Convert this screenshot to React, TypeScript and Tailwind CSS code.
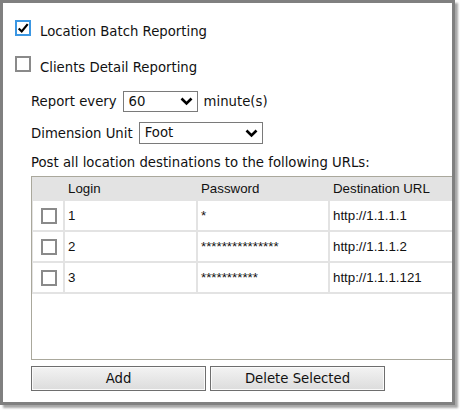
import React from "react";

const rows = [
  { login: "1", password: "*", url: "http://1.1.1.1" },
  { login: "2", password: "***************", url: "http://1.1.1.2" },
  { login: "3", password: "***********", url: "http://1.1.1.121" },
];

const Chevron = () => (
  <svg width="13" height="9" viewBox="0 0 13 9" className="shrink-0">
    <polyline points="1.5,1.5 6.5,6.5 11.5,1.5" fill="none" stroke="#000" strokeWidth="2.6" />
  </svg>
);

const Box = ({ checked = false }: { checked?: boolean }) => (
  <span
    className={
      "flex h-[16px] w-[16px] shrink-0 items-center justify-center bg-white " +
      (checked ? "border-2 border-[#3b97e3]" : "border-2 border-[#8a8a8a]")
    }
  >
    {checked && (
      <svg width="14" height="14" viewBox="0 0 14 14">
        <path d="M2 7.5 L5.5 11 L12.5 2.5" fill="none" stroke="#000" strokeWidth="2.6" />
      </svg>
    )}
  </span>
);

const Select = ({ value, width }: { value: string; width: string }) => (
  <div className={`flex h-full items-center justify-between border border-[#7a7a7a] bg-white pl-[5px] pr-[4px] ${width}`}>
    <span>{value}</span>
    <Chevron />
  </div>
);

export default function App() {
  return (
    <div className="h-[413px] w-[462px] bg-white">
      <div className="h-[405px] w-[455px] overflow-hidden border-[3px] border-[#808080] bg-white pl-[12px] pt-[17px] font-['DejaVu_Sans',sans-serif] text-[13.25px] leading-[16px] text-[#111] shadow-[3px_3px_2px_rgba(0,0,0,0.35)]">
        <div className="flex h-[16px] items-start gap-[9px]">
          <Box checked />
          <span className="pt-[4px]">Location Batch Reporting</span>
        </div>
        <div className="mt-[20px] flex h-[16px] items-start gap-[9px]">
          <Box />
          <span className="pt-[4px]">Clients Detail Reporting</span>
        </div>

        <div className="ml-[16px]">
          <div className="mt-[19px] flex h-[21px] items-center gap-[6px]">
            <span className="pt-[1px]">Report every</span>
            <Select value="60" width="w-[75px]" />
            <span className="pt-[1px]">minute(s)</span>
          </div>
          <div className="mt-[10px] flex h-[22px] items-center gap-[6px]">
            <span className="pt-[1px]">Dimension Unit</span>
            <Select value="Foot" width="w-[124px]" />
          </div>
          <p className="mt-[11px]">Post all location destinations to the following URLs:</p>

          <div className="mt-[5px] h-[184px] w-[460px] border border-[#aaa89c] bg-white font-['Liberation_Sans',Arial,sans-serif] text-[13.3px]">
            <div className="grid grid-cols-[30px_131px_130px_160px] gap-[2px] bg-[#e3e3e3] pb-[2px] pl-[1px]">
              <div className="h-[22px]" />
              <div className="flex h-[22px] items-center pl-[3px] pt-[1px]">Login</div>
              <div className="flex h-[22px] items-center pl-[3px] pt-[1px]">Password</div>
              <div className="flex h-[22px] items-center pl-[3px] pt-[1px]">Destination URL</div>
              {rows.map((r) => (
                <React.Fragment key={r.login}>
                  <div className="flex h-[29px] items-center justify-center bg-white pl-[1px]">
                    <Box />
                  </div>
                  <div className="flex h-[29px] items-center bg-white pl-[3px]">{r.login}</div>
                  <div className="flex h-[29px] items-center bg-white pl-[3px]">{r.password}</div>
                  <div className="flex h-[29px] items-center bg-white pl-[3px]">{r.url}</div>
                </React.Fragment>
              ))}
            </div>
          </div>

          <div className="mt-[6px] flex gap-[4px]">
            {["Add", "Delete Selected"].map((label) => (
              <button
                key={label}
                type="button"
                className="h-[25px] w-[175px] border border-[#6e6e6e] bg-gradient-to-b from-[#f3f3f3] to-[#dcdcdc] pt-[1px] text-[13.25px] text-[#111] shadow-[inset_0_0_0_1px_#fafafa]"
              >
                {label}
              </button>
            ))}
          </div>
        </div>
      </div>
    </div>
  );
}
